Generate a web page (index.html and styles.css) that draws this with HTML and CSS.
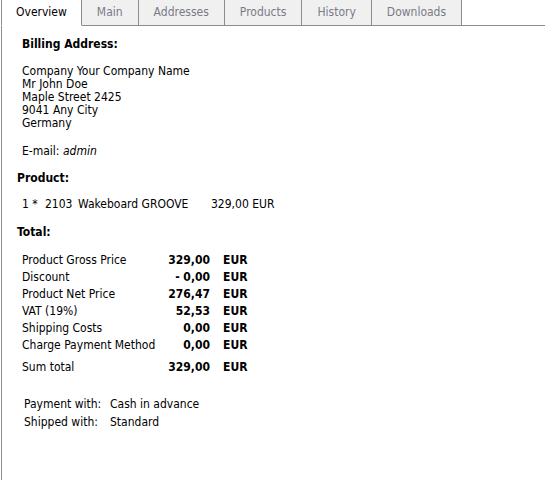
FILE: index.html
```html
<!DOCTYPE html>
<html>
<head>
<meta charset="utf-8">
<link rel="stylesheet" href="styles.css">
</head>
<body>
<div class="tabs">
  <div class="tab active">Overview</div>
  <div class="tab">Main</div>
  <div class="tab">Addresses</div>
  <div class="tab">Products</div>
  <div class="tab">History</div>
  <div class="tab">Downloads</div>
  <div class="filler"></div>
</div>
<div class="panel">
  <div class="heading billing">Billing Address:</div>
  <div class="address">
    <div>Company Your Company Name</div>
    <div>Mr John Doe</div>
    <div>Maple Street 2425</div>
    <div>9041 Any City</div>
    <div>Germany</div>
  </div>
  <div class="email">E-mail: <i>admin</i></div>
  <div class="heading section">Product:</div>
  <div class="product-line">
    <span class="qty">1 *</span>
    <span class="sku">2103</span>
    <span class="pname">Wakeboard GROOVE</span>
    <span class="pprice">329,00 EUR</span>
  </div>
  <div class="heading section total-head">Total:</div>
  <div class="totals">
    <div class="lbl">Product Gross Price</div><div class="num">329,00</div><div class="cur">EUR</div>
    <div class="lbl">Discount</div><div class="num">- 0,00</div><div class="cur">EUR</div>
    <div class="lbl">Product Net Price</div><div class="num">276,47</div><div class="cur">EUR</div>
    <div class="lbl">VAT (19%)</div><div class="num">52,53</div><div class="cur">EUR</div>
    <div class="lbl">Shipping Costs</div><div class="num">0,00</div><div class="cur">EUR</div>
    <div class="lbl">Charge Payment Method</div><div class="num">0,00</div><div class="cur">EUR</div>
    <div class="lbl sum">Sum total</div><div class="num sum">329,00</div><div class="cur sum">EUR</div>
  </div>
  <div class="methods">
    <div class="mlbl">Payment with:</div><div class="mval">Cash in advance</div>
    <div class="mlbl">Shipped with:</div><div class="mval">Standard</div>
  </div>
</div>
</body>
</html>
```
FILE: styles.css
```css
html, body {
  margin: 0;
  padding: 0;
  background: #fff;
}
body {
  font-family: "DejaVu Sans Condensed", "DejaVu Sans", sans-serif;
  font-size: 12px;
  line-height: 13px;
  color: #000;
  height: 480px;
  display: flex;
  flex-direction: column;
}
.tabs {
  display: flex;
  padding-left: 1px;
  height: 26px;
  flex: none;
}
.tab {
  box-sizing: border-box;
  height: 26px;
  line-height: 25px;
  padding: 0 15px 0 15px;
  background: #f0f0f0;
  color: #7a7a86;
  border-right: 1px solid #8c8c8c;
  border-bottom: 1px solid #8c8c8c;
}
.tab.active {
  background: #fff;
  color: #000;
  border-left: 1px solid #8c8c8c;
  border-bottom-color: #fff;
  padding: 0 14px;
}
.filler {
  flex: 1;
  border-bottom: 1px solid #8c8c8c;
}
.panel {
  flex: 1;
  margin-left: 1px;
  border-left: 1px solid #8c8c8c;
  padding-left: 20px;
}
.heading {
  font-weight: bold;
}
.billing {
  margin-top: 12px;
}
.address {
  margin-top: 14px;
}
.email {
  margin-top: 15px;
}
.section {
  margin-left: -5px;
  margin-top: 14px;
}
.total-head {
  margin-top: 15px;
}
.product-line {
  margin-top: 13px;
  display: flex;
}
.qty { width: 23px; }
.sku { width: 33px; }
.pname { width: 133px; }
.totals {
  margin-top: 13px;
  display: grid;
  grid-template-columns: 138px 50px auto;
  grid-auto-rows: 17px;
  line-height: 17px;
}
.num {
  text-align: right;
  font-weight: bold;
}
.cur {
  padding-left: 13px;
  font-weight: bold;
}
.totals > .sum {
  height: 22px;
  padding-top: 5px;
  box-sizing: border-box;
}
.methods {
  margin-top: 24px;
  margin-left: 2px;
  display: grid;
  grid-template-columns: 86px auto;
  grid-auto-rows: 18px;
  line-height: 18px;
}
```
